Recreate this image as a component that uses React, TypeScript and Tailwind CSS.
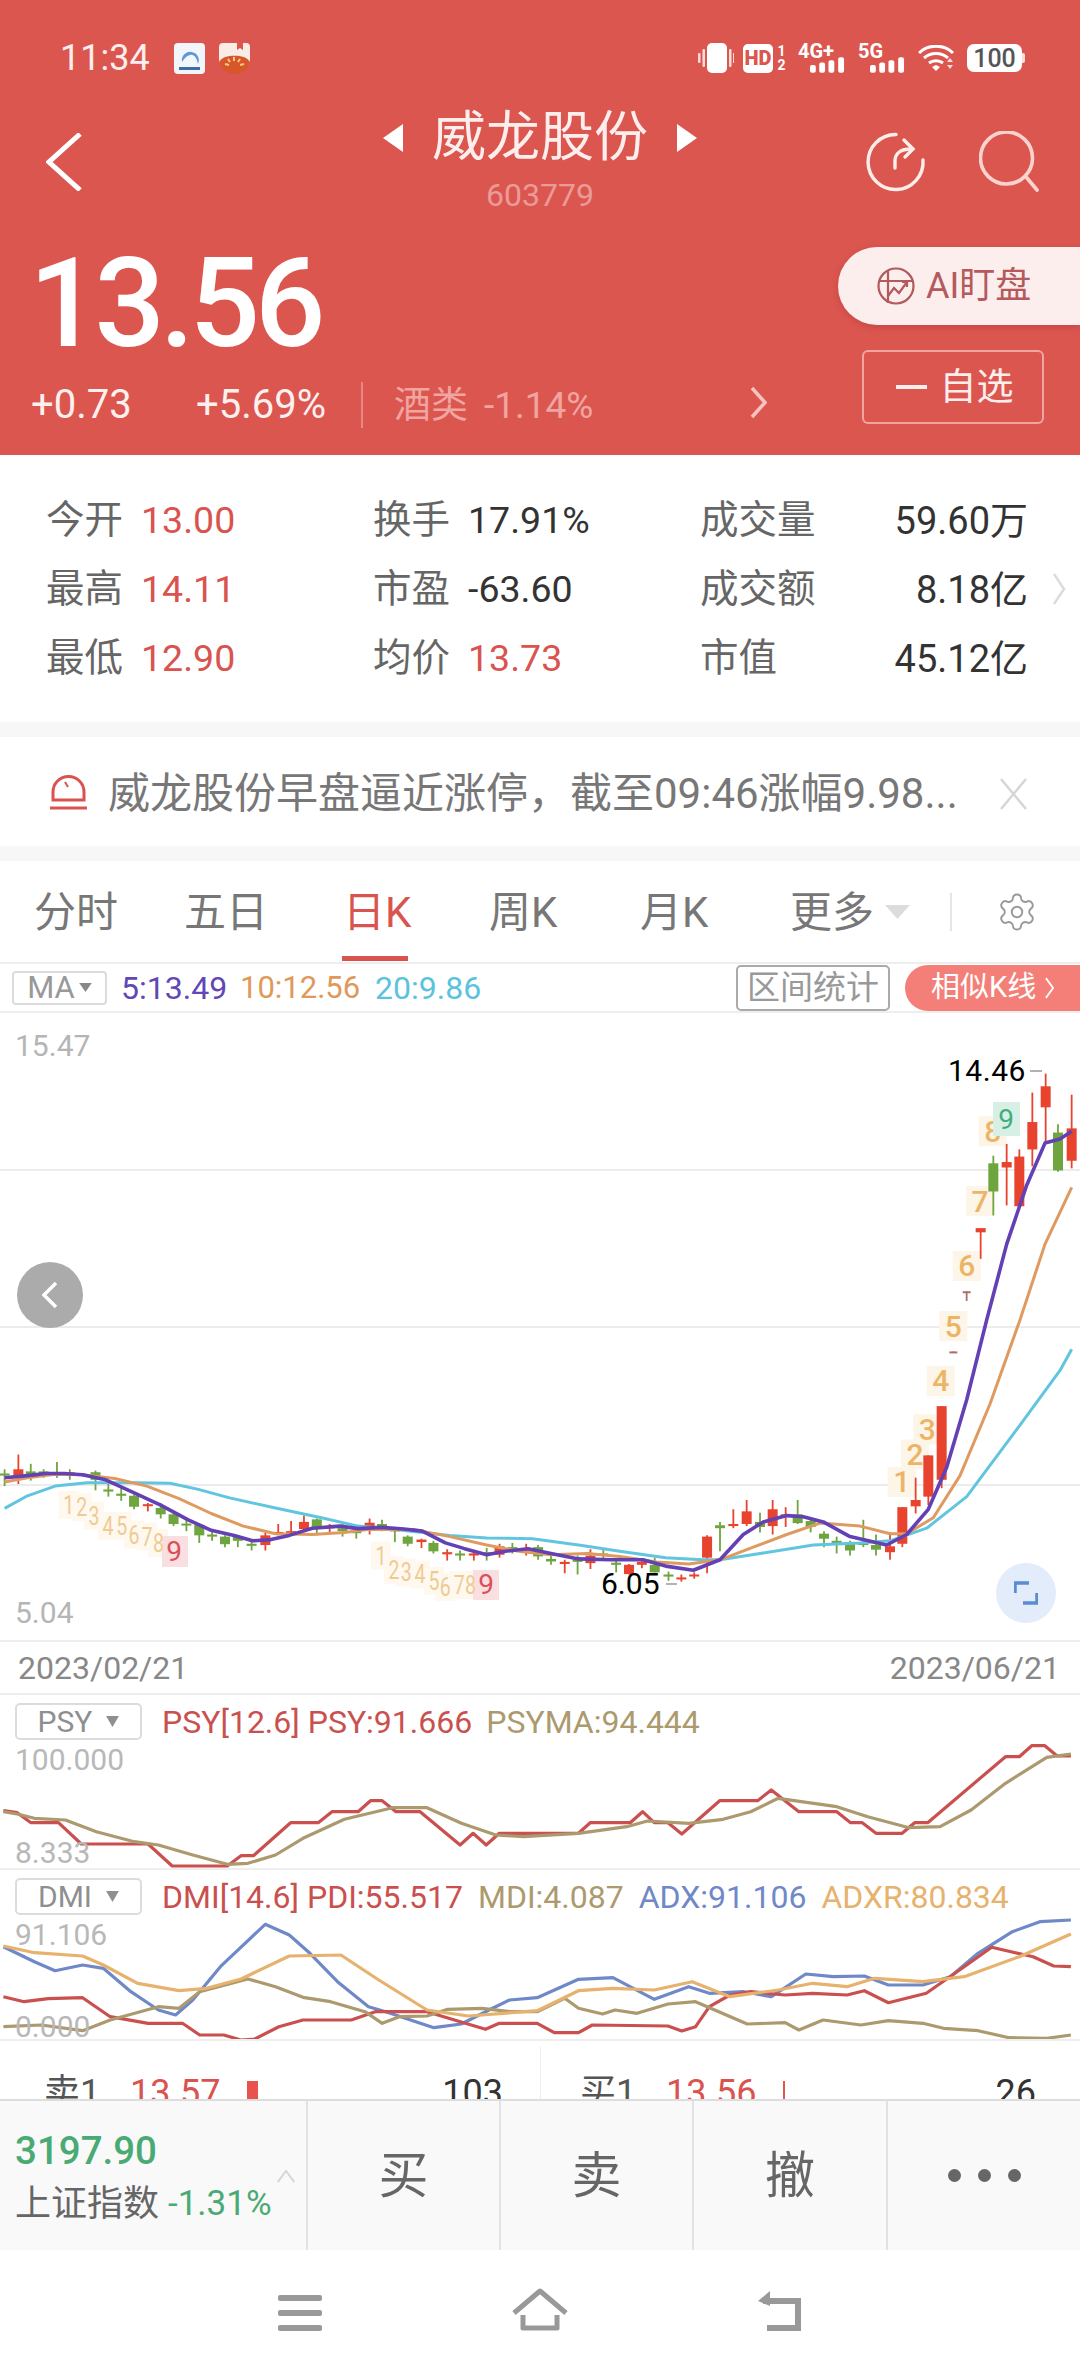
import React from "react";
import { Settings } from "lucide-react";

type P = [number, number];
const z3 = (x: number, y: number): P => [x / 2.178, 1000 + y / 2.376];
const z4 = (x: number, y: number): P => [720 + x / 3, 1000 + y / 2.376];
const z5 = (x: number, y: number): P => [x / 1.452, 1660 + y / 3];
const pts = (a: P[]) => a.map((p) => `${p[0].toFixed(1)},${p[1].toFixed(1)}`).join(" ");
const map = (f: (x: number, y: number) => P, a: number[][]) => a.map((p) => f(p[0], p[1]));

const purple = [
  ...map(z3, [[10,1135],[60,1130],[100,1125],[140,1125],[180,1128],[230,1140],[290,1170],[350,1200],[410,1235],[460,1260],[510,1272],[550,1285],[590,1282],[630,1272],[680,1255],[740,1250],[780,1256],[830,1253],[880,1257],[920,1262],[970,1290],[1010,1303],[1060,1318],[1100,1310],[1150,1304],[1200,1315],[1260,1328],[1330,1330],[1400,1330],[1450,1345],[1510,1355]]),
  ...map(z4, [[0,1330],[70,1270],[130,1240],[200,1225],[250,1228],[310,1240],[390,1275],[500,1295],[560,1270],[625,1210],[680,1110],[740,950],[800,760],[860,580],[920,440],[975,340],[1020,330],[1055,312]]),
];
const orange = [
  ...map(z3, [[10,1145],[60,1135],[120,1127],[180,1128],[250,1137],[320,1155],[390,1185],[460,1220],[530,1250],[600,1268],[680,1270],[750,1265],[800,1258],[900,1258],[980,1275],[1060,1295],[1130,1310],[1200,1318],[1280,1315],[1350,1322],[1430,1335],[1500,1340]]),
  ...map(z4, [[0,1330],[100,1300],[200,1270],[300,1243],[420,1250],[510,1268],[560,1268],[640,1230],[720,1130],[810,960],[900,760],[975,580],[1055,445]]),
];
const cyan = [
  ...map(z3, [[10,1208],[60,1178],[120,1155],[190,1147],[300,1147],[370,1148],[430,1162],[500,1183],[600,1207],[700,1230],[780,1250],[850,1257],[980,1272],[1060,1278],[1160,1280],[1260,1295],[1350,1310],[1450,1325],[1530,1330]]),
  ...map(z4, [[0,1330],[120,1315],[280,1295],[420,1290],[510,1285],[620,1255],[740,1180],[900,1010],[1020,880],[1055,830]]),
];

type C = [number, number, number, number, number, string];
const c3: C[] = [
  [10,1115,1155,1125,1130,"g"],[40,1080,1150,1115,1135,"r"],[67,1102,1142,1120,1127,"g"],[95,1115,1135,1120,1126,"g"],[124,1098,1135,1122,1127,"g"],[152,1115,1140,1122,1126,"g"],[208,1118,1165,1122,1140,"g"],[236,1150,1180,1163,1168,"g"],[264,1160,1190,1173,1178,"g"],[292,1175,1210,1178,1204,"g"],[322,1195,1215,1198,1202,"r"],[350,1195,1232,1207,1222,"g"],[378,1218,1250,1222,1245,"g"],[406,1232,1262,1244,1248,"g"],[434,1245,1290,1247,1272,"g"],[462,1262,1285,1270,1275,"g"],[490,1272,1300,1275,1293,"g"],[518,1272,1300,1276,1285,"g"],[548,1285,1308,1292,1297,"g"],[578,1265,1308,1272,1295,"r"],[606,1245,1272,1264,1268,"r"],[634,1238,1272,1262,1268,"r"],[662,1225,1260,1240,1257,"r"],[690,1232,1272,1234,1252,"g"],[718,1245,1265,1250,1255,"r"],[746,1245,1275,1255,1262,"g"],[776,1258,1280,1262,1267,"g"],[805,1232,1270,1242,1250,"r"],[832,1235,1262,1245,1253,"g"],[860,1255,1288,1258,1262,"g"],[888,1272,1298,1275,1292,"g"],[918,1280,1302,1282,1288,"r"],[944,1285,1315,1290,1310,"g"],[974,1305,1332,1312,1317,"r"],[1002,1308,1332,1315,1320,"g"],[1032,1308,1332,1315,1320,"r"],[1060,1302,1332,1312,1318,"g"],[1088,1292,1325,1298,1318,"r"],[1116,1290,1315,1300,1306,"g"],[1146,1292,1320,1302,1308,"r"],[1172,1295,1330,1300,1322,"g"],[1200,1320,1342,1328,1334,"g"],[1230,1330,1362,1335,1340,"r"],[1258,1320,1365,1330,1335,"g"],[1286,1305,1352,1320,1338,"r"],[1314,1305,1330,1315,1320,"g"],[1342,1330,1360,1337,1342,"g"],[1370,1340,1365,1342,1364,"r"],[1398,1330,1350,1335,1342,"r"],[1426,1325,1360,1342,1360,"g"],[1456,1358,1380,1365,1370,"g"],[1484,1365,1382,1372,1376,"r"],[1512,1360,1375,1365,1368,"r"],[1540,1272,1362,1275,1325,"r"],
];
const c4: C[] = [
  [1055,225,400,305,382,"r"],[1014,295,408,315,405,"g"],[977,175,340,205,255,"r"],[937,220,395,290,355,"r"],[898,355,490,372,490,"r"],[860,342,488,385,398,"r"],[820,370,512,388,455,"g"],[782,545,615,542,552,"r"],[740,692,715,692,696,"d"],[700,835,838,835,838,"d"],[665,965,1160,965,1140,"r"],[625,1082,1200,1082,1180,"r"],[587,1135,1220,1188,1203,"r"],[547,1205,1300,1205,1292,"r"],[510,1265,1330,1298,1312,"r"],[468,1270,1320,1295,1306,"g"],[430,1235,1300,1290,1295,"g"],[390,1285,1320,1292,1308,"g"],[350,1275,1315,1285,1290,"g"],[312,1262,1300,1268,1280,"g"],[272,1235,1265,1238,1252,"g"],[233,1188,1245,1222,1243,"g"],[197,1205,1252,1222,1228,"r"],[158,1188,1270,1210,1250,"r"],[120,1218,1265,1240,1252,"g"],[80,1188,1250,1215,1245,"r"],[40,1210,1255,1245,1250,"r"],[0,1240,1310,1248,1255,"g"],
];
const candleColor: Record<string, string> = { r: "#e8432e", g: "#6ea53e", d: "#a9716c" };

function Candle({ c, f }: { c: C; f: (x: number, y: number) => P }) {
  const [x, wt] = f(c[0], c[1]);
  const wb = f(c[0], c[2])[1];
  const bt = f(c[0], c[3])[1];
  const bb = f(c[0], c[4])[1];
  const col = candleColor[c[5]];
  const w = c[5] === "d" ? 8 : 10;
  return (
    <g>
      <line x1={x} x2={x} y1={wt} y2={wb} stroke={col} strokeWidth={1.8} />
      <rect x={x - w / 2} y={bt} width={w} height={Math.max(bb - bt, 2)} fill={col} />
    </g>
  );
}

const tdLeft: [number, number, string][] = [[150,1200,"1"],[178,1205,"2"],[205,1225,"3"],[235,1250,"4"],[265,1250,"5"],[292,1270,"6"],[320,1275,"7"],[345,1290,"8"],[830,1320,"1"],[858,1355,"2"],[885,1360,"3"],[915,1365,"4"],[945,1380,"5"],[970,1395,"6"],[1000,1390,"7"],[1025,1390,"8"]];
const tdRight: [number, number, string][] = [[545,1145,"1"],[585,1080,"2"],[622,1020,"3"],[662,905,"4"],[700,775,"5"],[740,632,"6"],[780,478,"7"],[818,312,"8"]];

function MainChart() {
  return (
    <svg viewBox="0 1013 1080 627" className="absolute left-0 top-0 h-[627px] w-[1080px]">
      {[1170, 1327, 1485].map((y) => (
        <line key={y} x1={0} x2={1080} y1={y} y2={y} stroke="#ececec" strokeWidth={2} />
      ))}
      {tdLeft.map(([x, y], i) => {
        const p = z3(x, y);
        return <rect key={i} x={p[0] - 10} y={p[1] - 14} width={20} height={28} fill="#fef8ef" />;
      })}
      {tdRight.map(([x, y], i) => {
        const p = z4(x, y);
        return <rect key={i} x={p[0] - 14} y={p[1] - 15} width={28} height={30} fill="#fdf5e8" />;
      })}
      <rect x={162} y={1536} width={26} height={31} fill="#fadfe0" />
      <rect x={473} y={1570} width={26} height={30} fill="#fadfe0" />
      <g fontFamily="Roboto, sans-serif" fontSize={26} fill="#efcb94" textAnchor="middle" dominantBaseline="central">
        {tdLeft.map(([x, y, t], i) => {
          const p = z3(x, y);
          return <text key={i} x={p[0]} y={p[1]} textLength={11} lengthAdjust="spacingAndGlyphs">{t}</text>;
        })}
      </g>
      <g fontFamily="Roboto, sans-serif" fontSize={30} fontWeight={500} fill="#ecb566" textAnchor="middle" dominantBaseline="central">
        {tdRight.map(([x, y, t], i) => {
          const p = z4(x, y);
          return <text key={i} x={p[0]} y={p[1]}>{t}</text>;
        })}
      </g>
      <rect x={993} y={1102} width={27} height={34} fill="#d8efe5" />
      <g fontFamily="Roboto, sans-serif" fontSize={28} textAnchor="middle" dominantBaseline="central">
        <text x={174} y={1551} fill="#d9505a">9</text>
        <text x={486} y={1584} fill="#d9505a">9</text>
        <text x={1006} y={1119} fill="#3fae7c">9</text>
      </g>
      {c3.map((c, i) => <Candle key={i} c={c} f={z3} />)}
      {c4.map((c, i) => <Candle key={i} c={c} f={z4} />)}
      <polyline points={pts(cyan)} fill="none" stroke="#62c5df" strokeWidth={3} strokeLinejoin="round" />
      <polyline points={pts(orange)} fill="none" stroke="#df9a60" strokeWidth={3} strokeLinejoin="round" />
      <polyline points={pts(purple)} fill="none" stroke="#6340b4" strokeWidth={3.6} strokeLinejoin="round" />
      <line x1={1030} x2={1042} y1={1071} y2={1071} stroke="#999" strokeWidth={1.5} />
      <line x1={666} x2={677} y1={1584} y2={1584} stroke="#999" strokeWidth={1.5} />
    </svg>
  );
}

const psyRed = [[5,452],[25,458],[45,488],[85,488],[118,552],[215,552],[250,618],[330,618],[350,587],[368,587],[422,488],[462,488],[482,455],[520,455],[538,422],[555,422],[575,455],[610,455],[668,555],[687,520],[706,555],[725,520],[840,520],[857,488],[915,488],[933,455],[950,488],[970,488],[990,522],[1045,422],[1100,422],[1120,390],[1160,455],[1215,455],[1235,488],[1252,488],[1272,520],[1310,520],[1328,488],[1347,488],[1460,290],[1480,290],[1498,257],[1517,257],[1535,288],[1555,288]];
const psyTan = [[5,455],[25,462],[50,475],[95,480],[140,515],[195,545],[230,555],[280,585],[330,613],[360,610],[400,585],[440,535],[500,478],[570,443],[620,443],[670,490],[720,525],[760,530],[840,520],[910,500],[940,483],[1000,490],[1050,478],[1090,455],[1130,415],[1215,440],[1260,470],[1320,503],[1365,500],[1410,450],[1460,370],[1520,292],[1555,282]];
const dmiBlue = [[5,860],[50,905],[80,932],[120,915],[150,925],[190,995],[230,1050],[255,1065],[280,1020],[320,920],[385,793],[420,825],[450,880],[490,965],[535,1040],[560,1055],[630,1103],[670,1092],[710,1050],[740,1020],[780,1013],[840,958],[890,953],[950,1018],[1000,980],[1030,1000],[1080,995],[1120,1010],[1170,942],[1210,950],[1255,948],[1290,975],[1340,975],[1380,950],[1420,880],[1470,815],[1510,785],[1555,780]];
const dmiOrange = [[5,858],[50,878],[120,888],[150,915],[200,970],[260,992],[300,985],[350,957],[420,888],[495,885],[550,960],[620,1050],[680,1068],[780,1052],[840,992],[890,985],[950,990],[1005,965],[1060,1010],[1130,990],[1180,970],[1230,980],[1270,955],[1340,965],[1400,950],[1480,890],[1555,822]];
const dmiRed = [[5,1010],[35,1025],[70,1016],[120,1013],[160,1070],[215,1090],[265,1090],[290,1125],[325,1125],[350,1140],[370,1137],[405,1100],[440,1080],[510,1080],[545,1055],[620,1055],[660,1080],[705,1108],[725,1090],[780,1090],[805,1118],[840,1118],[860,1095],[970,1098],[990,1113],[1010,1100],[1030,1040],[1060,1005],[1090,995],[1140,1005],[1180,1000],[1230,1005],[1255,992],[1290,1028],[1345,1000],[1400,920],[1440,862],[1500,890],[1530,918],[1555,920]];
const dmiTan = [[5,1100],[60,1095],[120,1112],[160,1080],[230,1040],[260,1045],[290,995],[360,957],[400,980],[440,1012],[480,1025],[530,1055],[555,1090],[580,1070],[620,1068],[650,1048],[700,1045],[740,1055],[780,1055],[820,1015],[840,1045],[875,1062],[893,1050],[925,1060],[970,1032],[1010,1025],[1085,1092],[1140,1088],[1160,1110],[1195,1080],[1250,1095],[1290,1082],[1340,1090],[1370,1105],[1420,1112],[1465,1133],[1520,1135],[1555,1125]];

function Lines({ y, h, lines }: { y: number; h: number; lines: [number[][], string][] }) {
  return (
    <svg viewBox={`0 ${y} 1080 ${h}`} className="absolute left-0 top-0 w-[1080px]" style={{ height: h }}>
      {lines.map(([d, col], i) => (
        <polyline key={i} points={pts(map(z5, d))} fill="none" stroke={col} strokeWidth={3.2} strokeLinejoin="round" />
      ))}
    </svg>
  );
}

function SelectBox({ label }: { label: string }) {
  return (
    <div className="flex h-[37px] w-[127px] shrink-0 items-center justify-center gap-[14px] rounded-[5px] border-2 border-[#dcdcdc] bg-white text-[30px] leading-none text-[#8f8f8f]">
      <span>{label}</span>
      <svg viewBox="0 0 14 12" className="h-[11px] w-[13px]"><path d="M0 0h14L7 12z" fill="#8f8f8f" /></svg>
    </div>
  );
}

function Stat({ l, v, red }: { l: string; v: string; red?: boolean }) {
  return (
    <div className="flex h-[69px] items-center gap-[18px]">
      <span className="text-[38.5px] leading-none text-[#666]">{l}</span>
      <span className={`text-[37.5px] leading-none ${red ? "text-[#d9534f]" : "text-[#333]"}`}>{v}</span>
    </div>
  );
}
function Stat3({ l, v }: { l: string; v: string }) {
  return (
    <div className="flex h-[69px] items-center justify-between">
      <span className="text-[38.5px] leading-none text-[#666]">{l}</span>
      <span className="text-[38px] leading-none text-[#333]">{v}</span>
    </div>
  );
}

function Bars({ className }: { className: string }) {
  return (
    <svg viewBox="0 0 36 16" className={className}>
      <rect x="0" y="8" width="6" height="8" rx="2" fill="#fff" />
      <rect x="9.5" y="5.5" width="6" height="10.5" rx="2" fill="#fff" />
      <rect x="19" y="3" width="6" height="13" rx="2" fill="#fff" />
      <rect x="29" y="0" width="6" height="16" rx="2" fill="#fff" />
    </svg>
  );
}

function StatusBar() {
  return (
    <div className="flex h-[116px] items-center pl-[60px] pr-[58px] text-white">
      <span className="w-[88px] text-[36px] leading-none text-[#fdeeee]">11:34</span>
      <svg viewBox="0 0 31 31" className="ml-[26px] h-[31px] w-[31px]">
        <rect width="31" height="31" rx="4" fill="#f2f6fb" />
        <path d="M8 19a8.5 8.5 0 1 1 16 2c-1-6-4-10-8-9-4 1-6 4-8 7z" fill="#5d97d4" />
        <rect x="5" y="24" width="21" height="3" fill="#3a6ea8" />
      </svg>
      <svg viewBox="0 0 31 31" className="ml-[14px] h-[31px] w-[31px]">
        <rect width="31" height="20" rx="4" fill="#f7ece6" />
        <path d="M18 0h6v7l-3-2-3 2z" fill="#dc5650" />
        <path d="M1 18c3-7 26-7 29 0 1 8-6 13-14 13S0 26 1 18z" fill="#d9552c" />
        <path d="M15 14v4M9 16l2 3M21 16l-2 3M6 21l4 1M25 21l-4 1" stroke="#f6cf7c" strokeWidth="2" />
      </svg>
      <svg viewBox="0 0 36 30" className="ml-auto h-[30px] w-[36px]">
        <rect x="9" y="0" width="20" height="30" rx="5" fill="#fff" />
        <rect x="0" y="10" width="2.5" height="10" rx="1" fill="#fbdcd9" />
        <rect x="4.5" y="6" width="2.5" height="18" rx="1" fill="#fbdcd9" />
        <rect x="31" y="6" width="2.5" height="18" rx="1" fill="#fbdcd9" />
        <rect x="35" y="10" width="1" height="10" fill="#fbdcd9" />
      </svg>
      <div className="ml-[9px] flex h-[29px] w-[30px] items-center justify-center rounded-[5px] bg-white text-[20px] font-black leading-none text-[#dc5650]">HD</div>
      <div className="ml-[4px] flex w-[9px] flex-col text-center text-[14px] font-bold leading-[14px]"><span>1</span><span>2</span></div>
      <div className="relative ml-[12px] h-[30px] w-[47px]">
        <span className="absolute left-0 top-[-2px] text-[20px] font-bold leading-none">4G+</span>
        <Bars className="absolute bottom-0 right-0 h-[16px] w-[35px]" />
      </div>
      <div className="relative ml-[13px] h-[30px] w-[47px]">
        <span className="absolute left-0 top-[-2px] text-[20px] font-bold leading-none">5G</span>
        <Bars className="absolute bottom-0 right-0 h-[16px] w-[35px]" />
      </div>
      <svg viewBox="0 0 37 26" className="ml-[13px] h-[26px] w-[37px]" fill="none" stroke="#fff" strokeWidth="3">
        <path d="M1 8c9-9 25-9 34 0" />
        <path d="M6 13c7-6 17-6 24 0" />
        <path d="M11 18c4-3 10-3 14 0" />
        <path d="M14 22l4 4 4-4-4-2z" fill="#fff" stroke="none" />
        <path d="M29 17l3-4 3 4zM29 20h6l-3 4z" fill="#fbdcd9" stroke="none" />
      </svg>
      <div className="relative ml-[12px] flex h-[28px] w-[55px] items-center justify-center rounded-[7px] bg-white text-[25px] font-medium leading-none text-[#555]">
        100
        <span className="absolute right-[-3px] top-[9px] h-[10px] w-[3px] rounded-r-[2px] bg-[#fbdcd9]" />
      </div>
    </div>
  );
}

function Header() {
  return (
    <div className="h-[455px] w-full bg-[#dc5650]">
      <StatusBar />
      <div className="flex h-[120px] items-start">
        <svg viewBox="0 0 36 58" className="ml-[46px] mt-[17px] h-[58px] w-[36px]" fill="none" stroke="#fff" strokeWidth="5">
          <path d="M34 1L3 29l31 28" />
        </svg>
        <svg viewBox="0 0 20 28" className="ml-[301px] mt-[8px] h-[28px] w-[20px]"><path d="M20 0v28L0 14z" fill="#fff" /></svg>
        <div className="ml-[29px] flex w-[216px] flex-col items-center">
          <span className="text-[54px] leading-[44px] text-[#fdeeee]">威龙股份</span>
          <span className="mt-[19px] text-[32px] leading-[32px] text-[#eb9b97]">603779</span>
        </div>
        <svg viewBox="0 0 20 28" className="ml-[29px] mt-[8px] h-[28px] w-[20px]"><path d="M0 0v28l20-14z" fill="#fff" /></svg>
        <svg viewBox="0 0 60 60" className="ml-[169px] mt-[16px] h-[60px] w-[60px]" fill="none" stroke="#fdeee9" strokeWidth="3.4" strokeLinecap="round">
          <path d="M30 2.5A27.5 27.5 0 1 0 57 28" />
          <path d="M29 36v-7c0-8 6-12 16-12" />
          <path d="M38 8l9 9-8 8" />
        </svg>
        <svg viewBox="0 0 60 62" className="ml-[53px] mt-[15px] h-[62px] w-[60px]" fill="none" stroke="#fbd3ce" strokeWidth="3.6" strokeLinecap="round">
          <circle cx="27.5" cy="27" r="26" />
          <path d="M48 47l10 12" />
        </svg>
      </div>
      <div className="flex h-[219px]">
        <div className="w-[838px]">
          <div className="h-[132px] pl-[29px] text-[124px] font-medium leading-[136px] tracking-[-5px] text-white">13.56</div>
          <div className="mt-[14px] flex h-[46px] items-center leading-none text-[#fdf0ef]">
            <span className="ml-[31px] w-[165px] text-[40px]">+0.73</span>
            <span className="w-[165px] text-[40px]">+5.69%</span>
            <span className="h-[46px] w-[2px] bg-[#e98782]" />
            <span className="ml-[31px] w-[90px] text-[37px] text-[#f1a5a1]">酒类</span>
            <span className="w-[266px] text-[37px] text-[#f1a5a1]">-1.14%</span>
            <svg viewBox="0 0 17 33" className="mt-[-6px] h-[33px] w-[17px]" fill="none" stroke="#f7c3bf" strokeWidth="3.5"><path d="M2 2l13 14.5L2 31" /></svg>
          </div>
        </div>
        <div className="flex flex-1 flex-col">
          <div className="ml-auto mt-[11px] flex h-[78px] w-[242px] items-center rounded-l-[39px] bg-[#fbeeec] pl-[39px] shadow-[0_2px_6px_rgba(120,30,30,0.25)]">
            <svg viewBox="0 0 38 38" className="h-[38px] w-[38px]" fill="none" stroke="#b25a5c" strokeWidth="2.2">
              <circle cx="19" cy="19" r="17.5" />
              <path d="M2 14h34M11 3v33" />
              <path d="M11 29l6-8 5 5 8-11M25 15h5v5" />
            </svg>
            <span className="ml-[11px] text-[36px] leading-none text-[#b45a5c]">AI盯盘</span>
          </div>
          <div className="ml-[24px] mt-[25px] flex h-[74px] w-[182px] items-center justify-center gap-[13px] rounded-[6px] border-2 border-[#f0a5a0] pl-[3px] text-[37px] leading-none text-[#fdeeee]">
            <span className="h-[4px] w-[31px] bg-[#fdeeee]" />
            <span>自选</span>
          </div>
        </div>
      </div>
    </div>
  );
}

function Stats() {
  return (
    <div className="relative h-[267px] bg-white pl-[46px] pr-[52px] pt-[31px]">
      <div className="grid grid-cols-[327px_327px_1fr]">
        <Stat l="今开" v="13.00" red />
        <Stat l="换手" v="17.91%" />
        <Stat3 l="成交量" v="59.60万" />
        <Stat l="最高" v="14.11" red />
        <Stat l="市盈" v="-63.60" />
        <Stat3 l="成交额" v="8.18亿" />
        <Stat l="最低" v="12.90" red />
        <Stat l="均价" v="13.73" red />
        <Stat3 l="市值" v="45.12亿" />
      </div>
      <svg viewBox="0 0 14 34" className="absolute left-[1052px] top-[117px] h-[34px] w-[14px]" fill="none" stroke="#dcdcdc" strokeWidth="2.5"><path d="M2 2l10 15L2 32" /></svg>
    </div>
  );
}

function Notice() {
  return (
    <div className="relative border-y-[15px] border-[#f7f7f7] bg-white">
      <div className="flex h-[109px] items-center pl-[50px]">
        <svg viewBox="0 0 37 36" className="h-[36px] w-[37px]" fill="none" stroke="#d9534f" strokeWidth="3">
          <path d="M3 26V18a15.5 15.5 0 0 1 31 0v8z" />
          <path d="M15 8l3 5" strokeWidth="2" />
          <path d="M0 34h37" />
        </svg>
        <span className="ml-[21px] whitespace-nowrap pt-[4px] text-[42px] leading-none text-[#777]">威龙股份早盘逼近涨停，截至09:46涨幅9.98...</span>
        <svg viewBox="0 0 27 32" className="absolute left-[1000px] top-[41px] h-[32px] w-[27px]" fill="none" stroke="#d6d6d6" strokeWidth="2.5"><path d="M1 1l25 30M26 1L1 31" /></svg>
      </div>
    </div>
  );
}

function Tabs() {
  const base = "pt-[2px] text-[42px] leading-none";
  return (
    <div className="relative flex h-[101px] items-center pl-[34px]">
      <span className={`${base} w-[150px] text-[#777]`}>分时</span>
      <span className={`${base} w-[159px] text-[#777]`}>五日</span>
      <span className={`${base} w-[146px] text-[#d9534f]`}>日K</span>
      <span className={`${base} w-[151px] text-[#777]`}>周K</span>
      <span className={`${base} w-[150px] text-[#777]`}>月K</span>
      <span className={`${base} w-[95px] text-[#777]`}>更多</span>
      <svg viewBox="0 0 25 14" className="h-[14px] w-[25px]"><path d="M0 0h25L12.5 14z" fill="#dcdcdc" /></svg>
      <span className="ml-[40px] h-[38px] w-[2px] bg-[#e5e5e5]" />
      <Settings className="ml-[44px] h-[42px] w-[42px] text-[#999]" strokeWidth={1.1} />
      <span className="absolute left-[342px] top-[95px] h-[5px] w-[66px] bg-[#d9534f]" />
    </div>
  );
}

function ChartHeader() {
  return (
    <div className="flex h-[51px] items-center border-y-2 border-[#eee] pl-[12px] text-[32px] leading-none">
      <div className="flex h-[34px] w-[95px] items-center justify-center gap-[4px] rounded-[4px] border-2 border-[#dcdcdc] text-[31px] text-[#999]">
        MA
        <svg viewBox="0 0 14 10" className="h-[9px] w-[13px]"><path d="M0 0h14L7 10z" fill="#888" /></svg>
      </div>
      <span className="ml-[14px] w-[119px] text-[#6147b5]">5:13.49</span>
      <span className="w-[135px] text-[31px] text-[#e0995c]">10:12.56</span>
      <span className="text-[#5bc3dd]">20:9.86</span>
      <div className="ml-auto flex h-[46px] w-[154px] items-center justify-center rounded-[5px] border-2 border-[#aaa] text-[33px] text-[#999]">区间统计</div>
      <div className="ml-[15px] flex h-[46px] w-[175px] items-center gap-[9px] rounded-l-[23px] bg-[#f47f78] pl-[26px] text-[29px] text-white">
        <span className="whitespace-nowrap">相似K线</span>
        <svg viewBox="0 0 10 24" className="h-[22px] w-[9px]" fill="none" stroke="#fff" strokeWidth="2"><path d="M1 1l8 11-8 11" /></svg>
      </div>
    </div>
  );
}

function Chart() {
  return (
    <div className="relative h-[629px] border-b-2 border-[#eee]">
      <MainChart />
      <span className="absolute left-[15px] top-[18px] text-[30px] leading-[30px] text-[#b5b5b5]">15.47</span>
      <span className="absolute left-[15px] top-[585px] text-[30px] leading-[30px] text-[#b5b5b5]">5.04</span>
      <span className="absolute left-[948px] top-[42px] text-[30px] leading-[32px] tracking-[0.5px] text-black">14.46</span>
      <span className="absolute left-[601px] top-[555px] text-[30px] leading-[32px] text-black">6.05</span>
      <div className="absolute left-[17px] top-[249px] flex h-[66px] w-[66px] items-center justify-center rounded-full bg-[#ababab]">
        <svg viewBox="0 0 16 28" className="h-[28px] w-[16px]" fill="none" stroke="#fff" strokeWidth="3.5"><path d="M14 2L2 14l12 12" /></svg>
      </div>
      <div className="absolute left-[996px] top-[550px] flex h-[60px] w-[60px] items-center justify-center rounded-full bg-[#e3ecfa]">
        <svg viewBox="0 0 24 24" className="h-[24px] w-[24px]" fill="none" stroke="#5b8bd0" strokeWidth="3.5"><path d="M1 12V2h14M23 12v10H9" /></svg>
      </div>
    </div>
  );
}

function Indicators() {
  return (
    <>
      <div className="flex h-[51px] items-center justify-between pl-[18px] pr-[20px] text-[32px] leading-none text-[#888]">
        <span>2023/02/21</span>
        <span>2023/06/21</span>
      </div>
      <div className="relative h-[175px] border-t-2 border-[#eee]">
        <Lines y={1695} h={173} lines={[[psyRed, "#c9504e"], [psyTan, "#ac9a6e"]]} />
        <div className="relative flex items-center pl-[15px] pt-[8px] text-[32px] leading-none">
          <SelectBox label="PSY" />
          <span className="ml-[20px] text-[#c9504e]">PSY[12.6] PSY:91.666</span>
          <span className="ml-[14px] text-[#ac9a6e]">PSYMA:94.444</span>
        </div>
        <span className="absolute left-[15px] top-[50px] text-[30px] leading-[30px] text-[#b8b8b8]">100.000</span>
        <span className="absolute left-[15px] top-[143px] text-[30px] leading-[30px] text-[#b8b8b8]">8.333</span>
      </div>
      <div className="relative h-[173px] border-y-2 border-[#eee]">
        <Lines y={1870} h={169} lines={[[dmiBlue, "#6f88c8"], [dmiRed, "#c9504e"], [dmiTan, "#ac9a6e"], [dmiOrange, "#e6b26e"]]} />
        <div className="relative flex items-center pl-[15px] pt-[8px] text-[32px] leading-none">
          <SelectBox label="DMI" />
          <span className="ml-[20px] text-[#c9504e]">DMI[14.6] PDI:55.517</span>
          <span className="ml-[15px] text-[#ac9a6e]">MDI:4.087</span>
          <span className="ml-[15px] text-[#6f88c8]">ADX:91.106</span>
          <span className="ml-[15px] text-[#e6b26e]">ADXR:80.834</span>
        </div>
        <span className="absolute left-[15px] top-[50px] text-[30px] leading-[30px] text-[#b8b8b8]">91.106</span>
        <span className="absolute left-[15px] top-[142px] text-[30px] leading-[30px] text-[#b8b8b8]">0.000</span>
      </div>
    </>
  );
}

function OrderRow() {
  return (
    <div className="flex h-[58px] items-start overflow-hidden pt-[34px] text-[36px] leading-none">
      <div className="flex w-[540px] items-center pl-[44px] pr-[37px]">
        <span className="w-[86px] text-[#555]">卖1</span>
        <span className="w-[117px] text-[#d9534f]">13.57</span>
        <span className="h-[24px] w-[11px] bg-[#e8534e]" />
        <span className="ml-auto text-[#333]">103</span>
      </div>
      <span className="mt-[-28px] h-[60px] w-[1px] bg-[#eee]" />
      <div className="flex flex-1 items-center pl-[39px] pr-[44px]">
        <span className="w-[86px] text-[#555]">买1</span>
        <span className="w-[117px] text-[#d9534f]">13.56</span>
        <span className="h-[24px] w-[2px] bg-[#e8534e]" />
        <span className="ml-auto text-[#333]">26</span>
      </div>
    </div>
  );
}

function TradeBar() {
  const cell = "flex items-center justify-center border-l-2 border-[#e2e2e2] text-[50px] leading-none text-[#666]";
  return (
    <div className="grid h-[151px] grid-cols-[306px_193px_193px_194px_1fr] border-t-2 border-[#ddd] bg-[#f9f9f9]">
      <div className="relative flex flex-col pl-[15px] pt-[31px]">
        <span className="text-[38.5px] font-medium leading-[38px] text-[#4aaa73]">3197.90</span>
        <div className="mt-[14px] flex items-center leading-[40px]">
          <span className="text-[36px] text-[#666]">上证指数</span>
          <span className="ml-[9px] text-[35px] text-[#4aaa73]">-1.31%</span>
        </div>
        <svg viewBox="0 0 20 14" className="absolute left-[276px] top-[69px] h-[13px] w-[20px]" fill="none" stroke="#d5d5d5" strokeWidth="2"><path d="M1 13L10 1l9 12" /></svg>
      </div>
      <div className={cell}>买</div>
      <div className={cell}>卖</div>
      <div className={cell}>撤</div>
      <div className={`${cell} gap-[17px]`}>
        <span className="h-[13px] w-[13px] rounded-full bg-[#666]" />
        <span className="h-[13px] w-[13px] rounded-full bg-[#666]" />
        <span className="h-[13px] w-[13px] rounded-full bg-[#666]" />
      </div>
    </div>
  );
}

function NavBar() {
  return (
    <div className="flex h-[126px] items-start bg-white pt-[38px]">
      <svg viewBox="0 0 44 36" className="ml-[278px] mt-[7px] h-[36px] w-[44px]" fill="#999">
        <rect width="44" height="6" rx="2" />
        <rect y="15" width="44" height="6" rx="2" />
        <rect y="30" width="44" height="6" rx="2" />
      </svg>
      <svg viewBox="0 0 56 43" className="ml-[190px] h-[43px] w-[56px]" fill="none" stroke="#999" strokeWidth="5" strokeLinejoin="round">
        <path d="M2 25L28 3l26 22" />
        <path d="M11 27v13h34V27" />
      </svg>
      <svg viewBox="0 0 46 41" className="ml-[189px] mt-[2px] h-[41px] w-[46px]" fill="none" stroke="#999" strokeWidth="6">
        <path d="M6 11h35v27H10" />
        <path d="M13 1L1 11l12 5z" fill="#999" stroke="none" />
      </svg>
    </div>
  );
}

export default function App() {
  return (
    <div className="relative h-[2376px] w-[1080px] overflow-hidden bg-white font-[family-name:Roboto,'Noto_Sans_CJK_SC',sans-serif]">
      <Header />
      <Stats />
      <Notice />
      <Tabs />
      <ChartHeader />
      <Chart />
      <Indicators />
      <OrderRow />
      <TradeBar />
      <NavBar />
    </div>
  );
}
